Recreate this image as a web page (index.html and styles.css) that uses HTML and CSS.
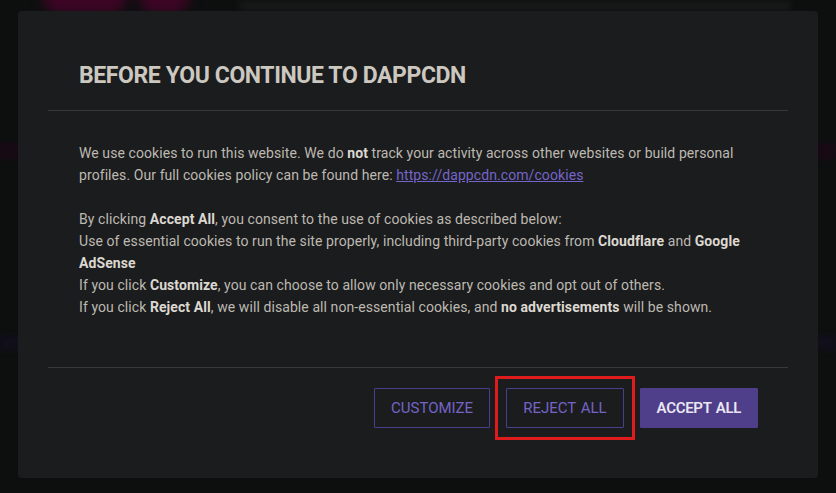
FILE: index.html
```html
<!DOCTYPE html>
<html lang="en">
<head>
<meta charset="utf-8">
<title>Before you continue to DappCDN</title>
<link rel="stylesheet" href="styles.css">
</head>
<body>
<div class="backdrop" aria-hidden="true">
  <div class="blob blob-a"></div>
  <div class="blob blob-b"></div>
  <div class="ghost-text"></div>
  <div class="strip strip-pink"></div>
  <div class="strip strip-blue"></div>
</div>
<div class="modal">
  <div class="modal-header">
    <h2 class="modal-title">BEFORE YOU CONTINUE TO DAPPCDN</h2>
  </div>
  <div class="modal-body">
    <p class="para">We use cookies to run this website. We do <b>not</b> track your activity across other websites or build personal profiles. Our full cookies policy can be found here: <a class="link" href="#">https://dappcdn.com/cookies</a></p>
    <p class="para">By clicking <b>Accept All</b>, you consent to the use of cookies as described below:<br>Use of essential cookies to run the site properly, including third-party cookies from <b>Cloudflare</b> and <b>Google AdSense</b><br>If you click <b>Customize</b>, you can choose to allow only necessary cookies and opt out of others.<br>If you click <b>Reject All</b>, we will disable all non-essential cookies, and <b>no advertisements</b> will be shown.</p>
  </div>
  <div class="modal-footer">
    <button class="btn btn-outline">CUSTOMIZE</button>
    <button class="btn btn-outline btn-marked">REJECT ALL</button>
    <button class="btn btn-solid">ACCEPT ALL</button>
  </div>
</div>
</body>
</html>
```
FILE: styles.css
```css
html, body {
  margin: 0;
  padding: 0;
}
body {
  width: 836px;
  height: 493px;
  overflow: hidden;
  background: #0d0f0f;
  font-family: Roboto, "Liberation Sans", sans-serif;
  position: relative;
}
.backdrop {
  position: absolute;
  inset: 0;
  z-index: 0;
}
.blob {
  position: absolute;
  top: -30px;
  height: 44px;
  background: #3d0525;
  filter: blur(6px);
  border-radius: 20px;
}
.blob-a { left: 42px; width: 86px; }
.blob-b { left: 138px; width: 52px; }
.ghost-text {
  position: absolute;
  top: 2px;
  left: 240px;
  width: 550px;
  height: 8px;
  background: #1a1b1b;
  filter: blur(3px);
}
.strip {
  position: absolute;
  left: 0;
  right: 0;
  height: 16px;
  filter: blur(2px);
}
.strip-pink { top: 143px; background: #180a15; }
.strip-blue { top: 335px; background: #100f1a; }
.modal {
  position: relative;
  z-index: 1;
  margin: 11px 0 0 18px;
  width: 800px;
  height: 467px;
  box-sizing: border-box;
  background: #1b1c1e;
  border-radius: 4px;
  padding: 0 30px;
  display: flex;
  flex-direction: column;
}
.modal-header {
  padding: 52px 31px 21px;
  border-bottom: 1px solid #38393b;
}
.modal-title {
  margin: 0;
  font-size: 23px;
  line-height: 26px;
  font-weight: 700;
  letter-spacing: -0.4px;
  color: #ccc8c0;
}
.modal-body {
  padding: 31px 31px 0;
  height: 225px;
  border-bottom: 1px solid #38393b;
}
.para {
  margin: 0 0 22px;
  font-size: 14px;
  line-height: 22px;
  letter-spacing: 0.08px;
  color: #bdb9b1;
}
.para b {
  color: #dcd8d0;
  font-weight: 700;
}
.link {
  color: #7565c9;
  text-decoration: underline;
}
.modal-footer {
  display: flex;
  justify-content: flex-end;
  gap: 16px;
  padding: 20px 30px 0;
}
.btn {
  height: 40px;
  box-sizing: border-box;
  padding: 0 16px;
  font-family: Roboto, "Liberation Sans", sans-serif;
  font-size: 15px;
  word-spacing: 1px;
  border-radius: 1px;
  cursor: pointer;
}
.btn-outline {
  background: transparent;
  border: 1px solid #4b3e8c;
  color: #7464c6;
  font-weight: 400;
}
.btn-solid {
  background: #4f3f8b;
  border: 1px solid #4f3f8b;
  color: #ebe7f2;
  font-weight: 600;
  letter-spacing: -0.3px;
}
.btn-marked {
  position: relative;
}
.btn-marked::after {
  content: "";
  position: absolute;
  top: -13px;
  bottom: -13px;
  left: -12px;
  right: -12px;
  border: 3px solid #e01b1b;
  pointer-events: none;
}
```
